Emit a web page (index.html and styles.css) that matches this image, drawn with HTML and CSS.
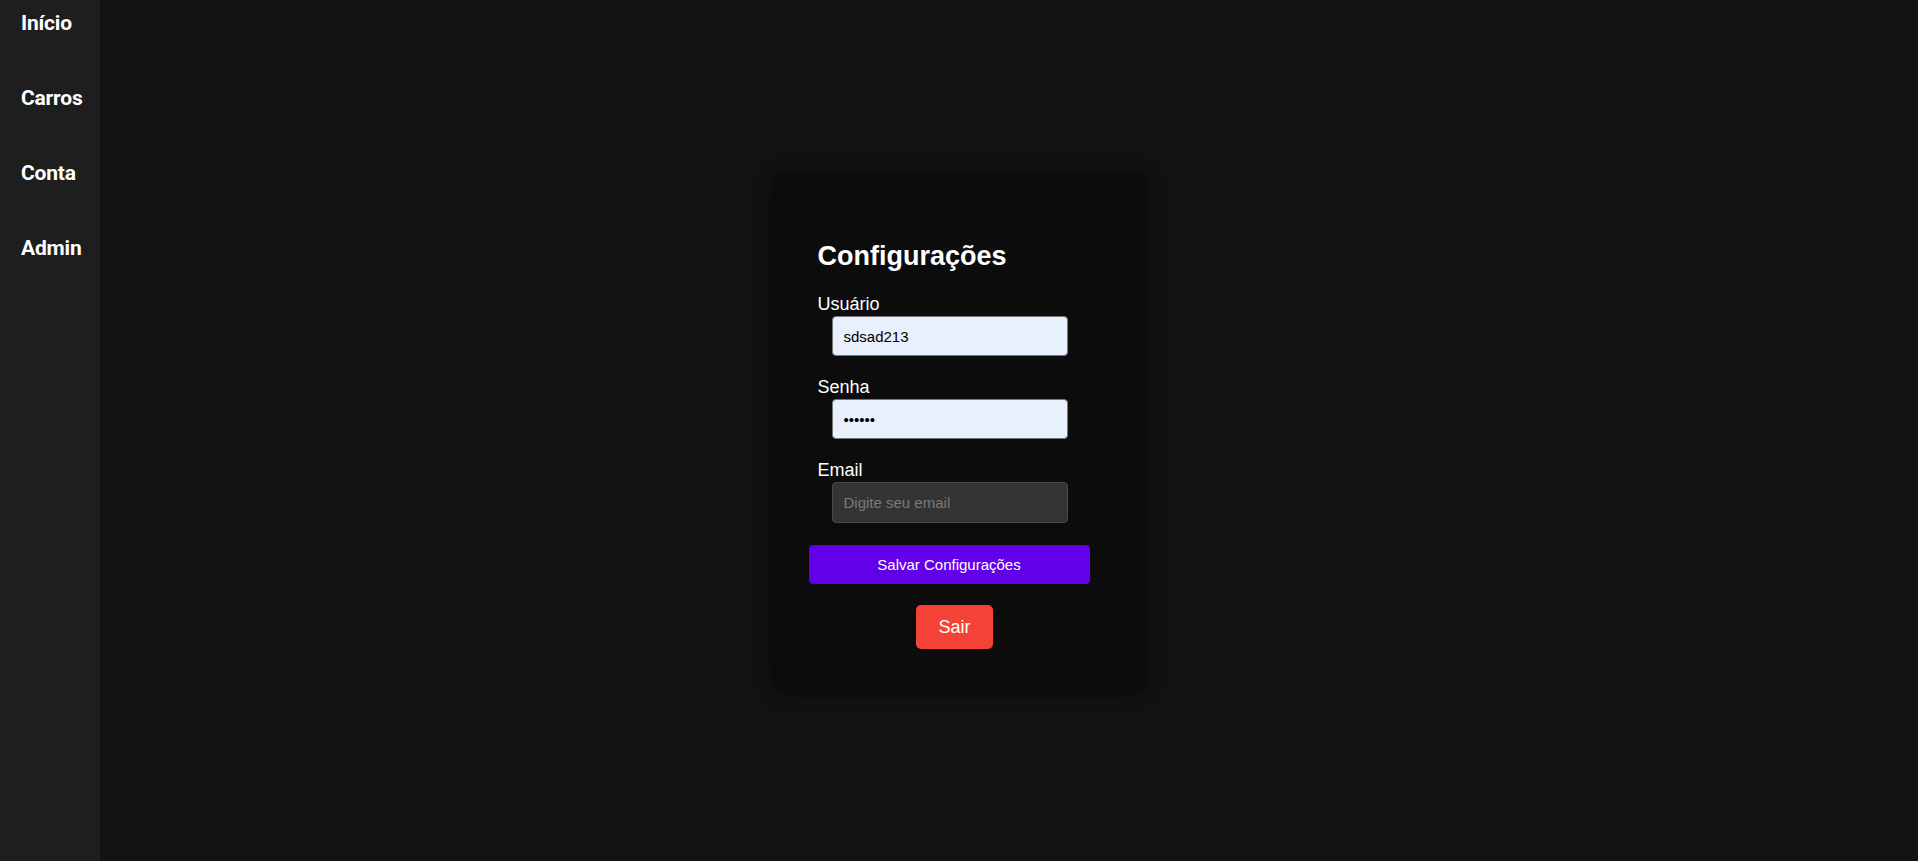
FILE: index.html
```html
<!DOCTYPE html>
<html lang="pt-BR">
<head>
<meta charset="utf-8">
<title>Configurações</title>
<link rel="stylesheet" href="styles.css">
</head>
<body>
<div class="app">
  <nav class="sidebar">
    <a class="nav-link" href="#">Início</a>
    <a class="nav-link" href="#">Carros</a>
    <a class="nav-link" href="#">Conta</a>
    <a class="nav-link" href="#">Admin</a>
  </nav>
  <main class="main">
    <section class="card">
      <h2 class="title">Configurações</h2>
      <form class="form">
        <div class="field">
          <label class="label" for="u">Usuário</label>
          <input class="input filled" id="u" type="text" value="sdsad213">
        </div>
        <div class="field">
          <label class="label" for="p">Senha</label>
          <input class="input filled" id="p" type="password" value="123456">
        </div>
        <div class="field">
          <label class="label" for="e">Email</label>
          <input class="input empty" id="e" type="email" placeholder="Digite seu email">
        </div>
        <button class="btn-save" type="button">Salvar Configurações</button>
        <button class="btn-exit" type="button">Sair</button>
      </form>
    </section>
  </main>
</div>
</body>
</html>
```

FILE: styles.css
```css
* { box-sizing: border-box; }
html, body { margin: 0; padding: 0; height: 100%; }
body {
  background: #121212;
  font-family: "Liberation Sans", Arial, sans-serif;
  color: #fff;
  overflow: hidden;
}
.app {
  display: flex;
  height: 100vh;
}
.sidebar {
  width: 100px;
  flex: 0 0 100px;
  background: #1e1e1e;
  padding-top: 11px;
  display: flex;
  flex-direction: column;
}
.nav-link {
  display: block;
  padding-left: 21px;
  font-family: Roboto, "Liberation Sans", sans-serif;
  font-weight: 700;
  font-size: 21px;
  line-height: 25px;
  margin-bottom: 50px;
  color: #fff;
  text-decoration: none;
  letter-spacing: -0.2px;
}
.main {
  flex: 1;
  display: flex;
  align-items: center;
  justify-content: center;
  padding-right: 100px;
}
.card {
  width: 375px;
  height: 520px;
  margin-top: 5px;
  background: #0c0c0c;
  border-radius: 15px;
  box-shadow: 0 0 14px rgba(0, 0, 0, 0.55);
  padding: 68px 46px 0 37px;
}
.title {
  margin: 0 0 22px 9px;
  font-size: 27px;
  line-height: 31px;
  font-weight: 700;
}
.form {
  display: flex;
  flex-direction: column;
}
.field {
  display: flex;
  flex-direction: column;
  margin-bottom: 21px;
}
.label {
  display: block;
  margin: 0 0 1px 9px;
  font-size: 18px;
  line-height: 21px;
}
.input {
  width: 236px;
  height: 40px;
  margin-left: 23px;
  padding: 0 11px;
  font-family: "Liberation Sans", Arial, sans-serif;
  font-size: 15px;
  border-radius: 4px;
  outline: none;
}
.input.filled {
  background: #e8f0fe;
  border: 1px solid #767676;
  color: #000;
}
.input.empty {
  background: #333333;
  border: 1px solid #4a4a4a;
  color: #fff;
  height: 41px;
}
.input.empty::placeholder { color: #7a7a7a; }
.btn-save {
  width: 281px;
  height: 39px;
  margin-top: 1px;
  background: #6200ea;
  color: #fff;
  border: none;
  border-radius: 4px;
  font-family: "Liberation Sans", Arial, sans-serif;
  font-size: 15px;
  padding: 0;
}
.btn-exit {
  align-self: center;
  margin-top: 21px;
  height: 44px;
  padding: 0 22px;
  background: #f44336;
  color: #fff;
  border: none;
  border-radius: 5px;
  font-family: "Liberation Sans", Arial, sans-serif;
  font-size: 18px;
}
```
